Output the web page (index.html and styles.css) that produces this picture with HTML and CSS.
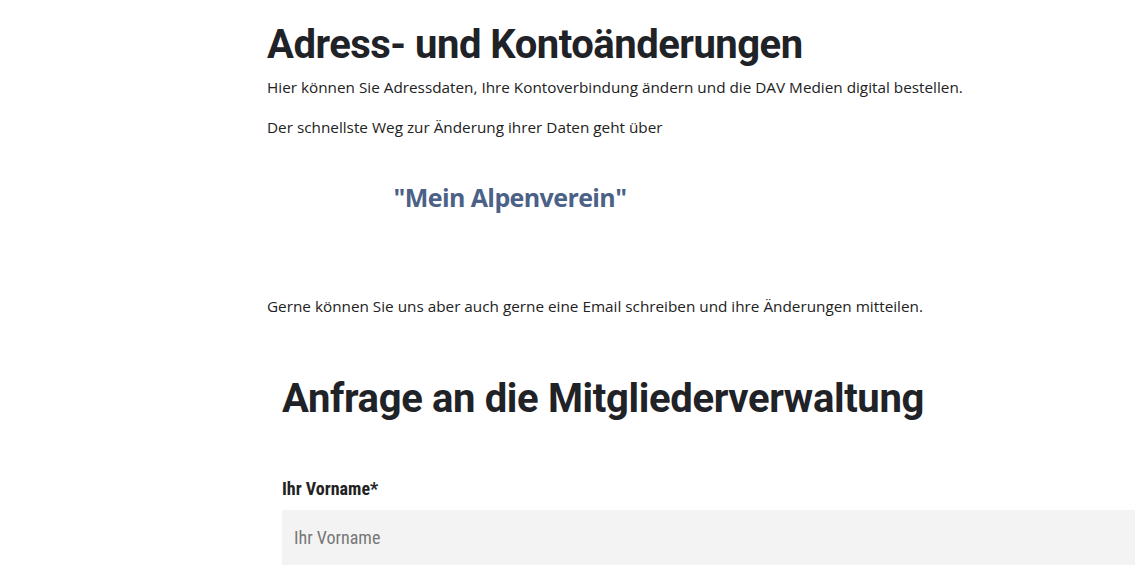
FILE: index.html
```html
<!DOCTYPE html>
<html lang="de">
<head>
<meta charset="utf-8">
<title>Adress- und Kontoänderungen</title>
<link rel="stylesheet" href="styles.css">
</head>
<body>
<main class="page">
  <section class="intro">
    <h1 class="title">Adress- und Kontoänderungen</h1>
    <p class="text">Hier können Sie Adressdaten, Ihre Kontoverbindung ändern und die DAV Medien digital bestellen.</p>
    <p class="text">Der schnellste Weg zur Änderung ihrer Daten geht über</p>
    <div class="link-col">
      <a class="portal-link" href="#">"Mein Alpenverein"</a>
    </div>
    <p class="text mail">Gerne können Sie uns aber auch gerne eine Email schreiben und ihre Änderungen mitteilen.</p>
  </section>
  <section class="form-area">
    <h2 class="form-title">Anfrage an die Mitgliederverwaltung</h2>
    <form class="form">
      <label class="field">
        <span class="label">Ihr Vorname*</span>
        <input class="input" type="text" placeholder="Ihr Vorname">
      </label>
    </form>
  </section>
</main>
</body>
</html>
```

FILE: styles.css
```css
html, body {
  margin: 0;
  padding: 0;
  background: #ffffff;
  overflow: hidden;
}

body {
  font-family: "Open Sans", "Noto Sans", sans-serif;
  color: #222222;
}

.page {
  padding-left: 267px;
}

.intro {
  padding-top: 21px;
}

.title {
  margin: 0 0 6px 0;
  font-family: "Roboto", sans-serif;
  font-weight: 700;
  font-size: 40px;
  line-height: 48px;
  letter-spacing: -0.5px;
  color: #1f2226;
}

.text {
  margin: 0 0 16px 0;
  font-size: 15.3px;
  line-height: 24px;
  color: #222222;
}

.link-col {
  width: 486px;
  display: flex;
  justify-content: center;
  padding: 25px 0 80px 0;
}

.portal-link {
  font-family: "Open Sans", sans-serif;
  font-weight: 700;
  font-size: 25px;
  line-height: 34px;
  letter-spacing: -0.6px;
  color: #4b6186;
  text-decoration: none;
}

.mail {
  margin-bottom: 0;
}

.form-area {
  padding-left: 15px;
  padding-top: 57px;
}

.form-title {
  margin: 0;
  font-family: "Roboto", sans-serif;
  font-weight: 700;
  font-size: 40px;
  line-height: 48px;
  letter-spacing: -0.35px;
  color: #1f2226;
}

.form {
  padding-top: 56px;
}

.field {
  display: flex;
  flex-direction: column;
  gap: 11px;
}

.label {
  font-family: "Roboto", sans-serif;
  font-stretch: 80%;
  font-weight: 700;
  font-size: 18px;
  line-height: 20px;
  color: #222222;
}

.input {
  box-sizing: border-box;
  width: 900px;
  height: 55px;
  border: none;
  background: #f3f3f3;
  padding: 0 12px;
  font-family: "Roboto", sans-serif;
  font-stretch: 80%;
  font-size: 18px;
  color: #333333;
  outline: none;
}

.input::placeholder {
  color: #777777;
}
```
